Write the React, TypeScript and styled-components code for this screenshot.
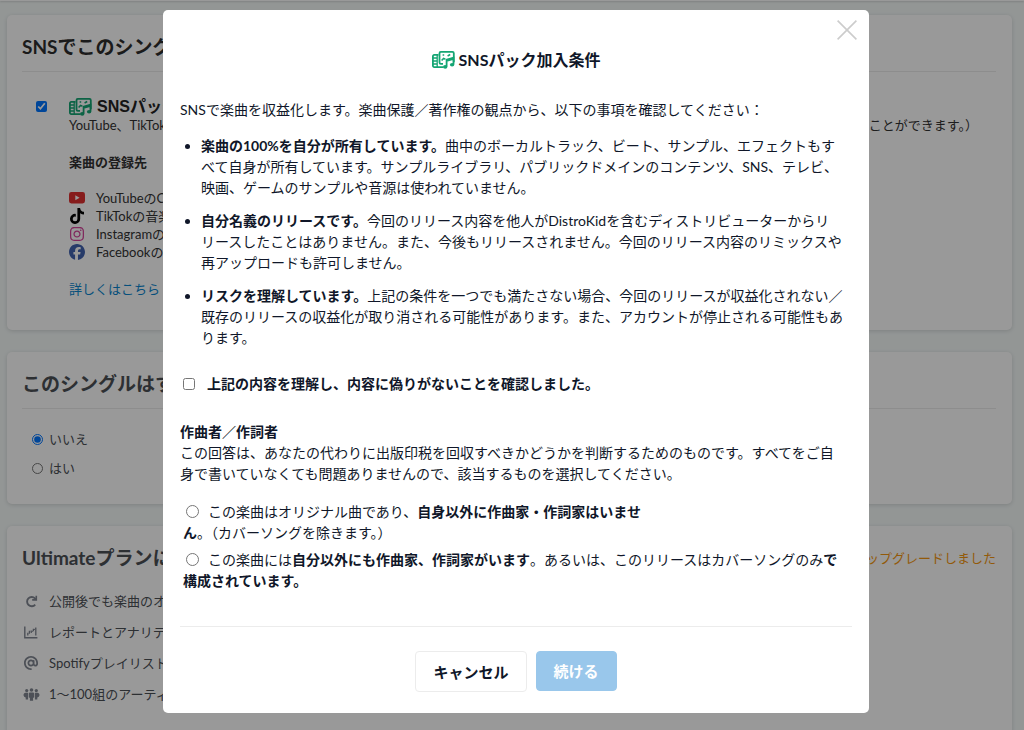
import React from "react";
import styled, { createGlobalStyle } from "styled-components";
import { FaAt, FaFacebook, FaTiktok, FaInstagram } from "react-icons/fa6";

const GlobalStyle = createGlobalStyle`
  *, *::before, *::after { box-sizing: border-box; }
  body {
    margin: 0;
    overflow: hidden;
    background: #f5faf9;
    font-family: Lato, "Noto Sans CJK JP", sans-serif;
    font-size: 13px;
    line-height: 18px;
    color: #333;
  }
  h1, h2, h3, p, ul { margin: 0; padding: 0; }
`;

const Page = styled.div`
  height: 100vh;
  overflow: hidden;
`;

const TopBar = styled.header`
  height: 1px;
  background: #fff;
  box-shadow: 0 1px 2px rgba(0, 0, 0, 0.2);
`;

const Main = styled.main`
  display: flex;
  flex-direction: column;
  gap: 22px;
  padding: 14px 12px 0 7px;
`;

const Card = styled.section<{ $height: number }>`
  min-height: ${(p) => p.$height}px;
  padding: 17px 16px 24px 15px;
  background: #fff;
  border-radius: 5px;
  box-shadow: 0 1px 4px rgba(0, 0, 0, 0.14);
`;

const CardHeading = styled.h2<{ $muted?: boolean; $plain?: boolean }>`
  padding-bottom: ${(p) => (p.$plain ? 0 : 9)}px;
  border-bottom: ${(p) => (p.$plain ? "none" : "1px solid #ebebeb")};
  font-size: 19px;
  line-height: 30px;
  font-weight: 700;
  color: ${(p) => (p.$muted ? "#4c5056" : "#2e2e2e")};
  white-space: nowrap;
`;

const PackRow = styled.div`
  display: flex;
  gap: 22px;
  padding: 26px 18px 0 14px;
`;

const PackCheck = styled.input`
  flex: none;
  width: 11px;
  height: 11px;
  margin: 3px 0;
`;

const PackBody = styled.div`
  flex: 1;
`;

const PackTitle = styled.label`
  display: flex;
  align-items: center;
  gap: 5px;
  font: 700 16px/18px "Liberation Sans", "Noto Sans CJK JP", sans-serif;
  color: #222;
`;

const Spread = styled.div`
  display: flex;
  justify-content: space-between;
  white-space: nowrap;
`;

const SubHeading = styled.h3`
  margin: 19px 0 18px;
  font-size: 13px;
  line-height: 18px;
`;

const Services = styled.ul`
  list-style: none;
`;

const Service = styled.li`
  display: flex;
  align-items: center;
  gap: 11px;
  line-height: 18px;
`;

const ServiceIcon = styled.span<{ $color: string }>`
  display: flex;
  width: 16px;
  color: ${(p) => p.$color};
`;

const MoreLink = styled.a`
  display: inline-block;
  margin-top: 19px;
  color: #0b86cf;
  text-decoration: none;
`;

const Choices = styled.div`
  display: flex;
  flex-direction: column;
  gap: 11px;
  padding: 21px 10px 0;
`;

const Choice = styled.label`
  display: flex;
  align-items: center;
  gap: 6px;
  color: #4c5056;

  input {
    width: 11px;
    height: 11px;
    margin: 0;
  }
`;

const UpgradeNote = styled.a`
  color: #f5970f;
  text-decoration: none;
`;

const CardTop = styled.div`
  display: flex;
  justify-content: space-between;
  align-items: center;
`;

const Features = styled.ul`
  display: flex;
  flex-direction: column;
  gap: 13px;
  padding-top: 19px;
  list-style: none;
  color: #4c5056;
`;

const Feature = styled.li`
  display: flex;
  align-items: center;
  gap: 9px;
`;

const FeatureIcon = styled.span`
  display: flex;
  justify-content: center;
  width: 18px;
  color: #808691;
`;

const Overlay = styled.div`
  position: fixed;
  inset: 0;
  display: flex;
  justify-content: center;
  align-items: flex-start;
  padding: 10px 0 10px 8px;
  overflow: auto;
  background: rgba(0, 0, 0, 0.4);
`;

const Dialog = styled.div`
  position: relative;
  width: 706px;
  max-width: 100%;
  padding: 39px 17px 21px;
  background: #fff;
  border-radius: 5px;
  font-size: 14px;
  line-height: 21px;
  color: #101729;
`;

const CloseButton = styled.button`
  position: absolute;
  top: 10px;
  right: 12px;
  display: flex;
  padding: 0;
  border: 0;
  background: none;
  color: #ccc;
`;

const DialogTitle = styled.h1`
  display: flex;
  justify-content: center;
  align-items: center;
  gap: 4px;
  margin-bottom: 28px;
  font-size: 16px;
  line-height: 22px;
  font-weight: 700;
`;

const Terms = styled.ul`
  display: flex;
  flex-direction: column;
  gap: 12px;
  margin: 15px 0 25px;
  padding: 0 6px 0 21px;
`;

const Confirm = styled.label`
  display: flex;
  align-items: center;
  gap: 12px;
  padding-left: 3px;
  margin-bottom: 27px;
  font-weight: 700;

  input {
    width: 12px;
    height: 12px;
    margin: 0;
  }
`;

const WriterHeading = styled.h2`
  font-size: 14px;
  line-height: 21px;
`;

const WriterText = styled.p`
  padding-right: 6px;
`;

const WriterOptions = styled.div`
  display: flex;
  flex-direction: column;
  gap: 6px;
  margin: 17px 0 35px;
  padding: 0 6px 0 3px;
`;

const WriterOption = styled.label<{ $maxWidth?: number }>`
  display: block;
  max-width: ${(p) => (p.$maxWidth ? `${p.$maxWidth}px` : "none")};

  input {
    width: 13px;
    height: 13px;
    margin: 0 9px 0 3px;
    vertical-align: -1px;
  }
`;

const Actions = styled.div`
  display: flex;
  justify-content: center;
  gap: 9px;
  padding: 24px 0 0;
  border-top: 1px solid #ececec;
`;

const Button = styled.button<{ $primary?: boolean }>`
  height: ${(p) => (p.$primary ? 40 : 41)}px;
  padding: 0 17px;
  border: 1px solid ${(p) => (p.$primary ? "#99c7eb" : "#ececec")};
  border-radius: 4px;
  background: ${(p) => (p.$primary ? "#99c7eb" : "#fff")};
  font: 700 15px/22px Lato, "Noto Sans CJK JP", sans-serif;
  color: ${(p) => (p.$primary ? "#fff" : "#101729")};
`;

const PackIcon = () => (
  <svg width="23" height="18" viewBox="0 0 23 18" fill="none" stroke="#14a573" aria-hidden="true">
    <path d="M6.500 3.900H2.200A1.300 1.300 0 0 0 .9 5.200v9.600a1.300 1.300 0 0 0 1.300 1.300H11.500" strokeWidth="1.8" />
    <path d="M5.200 4v12" strokeWidth="1.300" />
    <path d="M1 7h4M1 10h4M1 13h4" strokeWidth="1.500" />
    <path d="M11 12.800H8.800a1.300 1.300 0 0 1-1.300-1.300V2.200A1.300 1.300 0 0 1 8.800.9h11.700a1.300 1.300 0 0 1 1.300 1.300v9" strokeWidth="1.8" />
    <path d="M14.600 15.800V8.600l6.900-1.900v6.900M14.600 9.900l6.900-1.900" strokeWidth="1.800" />
    <ellipse cx="13.200" cy="15.900" rx="2.200" ry="1.800" fill="#14a573" stroke="none" />
    <ellipse cx="20.100" cy="13.800" rx="2.200" ry="1.700" fill="#14a573" stroke="none" />
    <path d="M9.600 9.600l2-2.200 1.800.8M10.600 3.900h1.600M15.600 5l2.600-1.500" strokeWidth="1.500" />
  </svg>
);

const YouTubeIcon = () => (
  <svg width="16" height="12" viewBox="0 0 16 12" aria-hidden="true">
    <rect width="16" height="11.4" rx="2.4" fill="#e02f2f" />
    <path d="M6.3 3.2v5l4.3-2.5z" fill="#fff" />
  </svg>
);

const RedoIcon = () => (
  <svg width="13" height="13" viewBox="0 0 13 13" fill="none" stroke="currentColor" strokeWidth="1.9" aria-hidden="true">
    <path d="M10.2 9.6A4.6 4.6 0 1 1 10 3.4l1.2 1.2" />
    <path d="M11.3.8v4.1H7.2" strokeWidth="1.6" />
  </svg>
);

const ChartIcon = () => (
  <svg width="14" height="13" viewBox="0 0 14 13" fill="none" stroke="currentColor" strokeWidth="1.4" aria-hidden="true">
    <path d="M.8.6v11.2h12.6" />
    <path d="M3.800 9.400V6.800M5.400 7.800V4.800M7.200 6.800V4.400M9.400 5.200V2.800M11.800 1.600v7.800" strokeWidth="1.300" />
    <path d="M7 6.600l4.600-4.200" strokeWidth="1" />
  </svg>
);

const PeopleIcon = () => (
  <svg width="17" height="13" viewBox="0 0 16 13" fill="currentColor" aria-hidden="true">
    <circle cx="3.2" cy="2.6" r="1.6" />
    <circle cx="8" cy="2" r="1.8" />
    <circle cx="12.8" cy="2.6" r="1.6" />
    <path d="M2 4.8h2.6v6.6H2.2V9.6A3 3 0 0 1 0 7.200C0 5.800.8 4.800 2 4.800z" />
    <path d="M14 4.800h-2.600v6.600h2.400V9.600A3 3 0 0 0 16 7.200c0-1.400-.8-2.400-2-2.400z" />
    <path d="M6.600 4.400h2.800c.8 0 1.300.6 1.300 1.300v3.500L9.600 10v2.800H6.400V10L5.300 9.200V5.700c0-.7.5-1.300 1.300-1.300z" />
  </svg>
);

const CloseIcon = () => (
  <svg width="20" height="20" viewBox="0 0 20 20" stroke="currentColor" strokeWidth="1.6" aria-hidden="true">
    <path d="M.6.6l18.8 18.8M19.400.6L.6 19.400" />
  </svg>
);

const services = [
  { icon: <YouTubeIcon />, color: "#e02f2f", text: "YouTubeのC" },
  { icon: <FaTiktok size={16} />, color: "#000", text: "TikTokの音楽" },
  { icon: <FaInstagram size={16} />, color: "#d6439b", text: "Instagramの" },
  { icon: <FaFacebook size={16} />, color: "#4263b0", text: "Facebookの" },
];

const features = [
  { icon: <RedoIcon />, text: "公開後でも楽曲のオ" },
  { icon: <ChartIcon />, text: "レポートとアナリテ" },
  { icon: <FaAt size={14} />, text: "Spotifyプレイリスト" },
  { icon: <PeopleIcon />, text: "1〜100組のアーティ" },
];

const terms = [
  {
    lead: "楽曲の100%を自分が所有しています。",
    text: "曲中のボーカルトラック、ビート、サンプル、エフェクトもすべて自身が所有しています。サンプルライブラリ、パブリックドメインのコンテンツ、SNS、テレビ、映画、ゲームのサンプルや音源は使われていません。",
  },
  {
    lead: "自分名義のリリースです。",
    text: (
      <>
        今回のリリース内容を他人がDistroKidを含むディストリビューターからリ
        <br />
        リースしたことはありません。また、今後もリリースされません。今回のリリース内容のリミックスや再アップロードも許可しません。
      </>
    ),
  },
  {
    lead: "リスクを理解しています。",
    text: "上記の条件を一つでも満たさない場合、今回のリリースが収益化されない／既存のリリースの収益化が取り消される可能性があります。また、アカウントが停止される可能性もあります。",
  },
];

export default function App() {
  return (
    <>
      <GlobalStyle />
      <Page lang="ja">
        <TopBar />
        <Main>
          <Card $height={315}>
            <CardHeading>SNSでこのシング</CardHeading>
            <PackRow>
              <PackCheck type="checkbox" id="pack" defaultChecked />
              <PackBody>
                <PackTitle htmlFor="pack">
                  <PackIcon />
                  SNSパック
                </PackTitle>
                <Spread>
                  <span>YouTube、TikTok</span>
                  <span>ことができます。）</span>
                </Spread>
                <SubHeading>楽曲の登録先</SubHeading>
                <Services>
                  {services.map((s) => (
                    <Service key={s.text}>
                      <ServiceIcon $color={s.color}>{s.icon}</ServiceIcon>
                      {s.text}
                    </Service>
                  ))}
                </Services>
                <MoreLink href="#more">詳しくはこちら</MoreLink>
              </PackBody>
            </PackRow>
          </Card>

          <Card $height={152}>
            <CardHeading $muted>このシングルはす</CardHeading>
            <Choices>
              <Choice>
                <input type="radio" name="released" defaultChecked />
                いいえ
              </Choice>
              <Choice>
                <input type="radio" name="released" />
                はい
              </Choice>
            </Choices>
          </Card>

          <Card $height={260}>
            <CardTop>
              <CardHeading $muted $plain>
                Ultimateプランに
              </CardHeading>
              <UpgradeNote href="#upgrade">アップグレードしました</UpgradeNote>
            </CardTop>
            <Features>
              {features.map((f) => (
                <Feature key={f.text}>
                  <FeatureIcon>{f.icon}</FeatureIcon>
                  {f.text}
                </Feature>
              ))}
            </Features>
          </Card>
        </Main>
      </Page>

      <Overlay lang="ja">
        <Dialog role="dialog" aria-modal="true" aria-labelledby="dialog-title">
          <CloseButton type="button" aria-label="閉じる">
            <CloseIcon />
          </CloseButton>
          <DialogTitle id="dialog-title">
            <PackIcon />
            SNSパック加入条件
          </DialogTitle>
          <p>SNSで楽曲を収益化します。楽曲保護／著作権の観点から、以下の事項を確認してください：</p>
          <Terms>
            {terms.map((t) => (
              <li key={t.lead}>
                <strong>{t.lead}</strong>
                {t.text}
              </li>
            ))}
          </Terms>
          <Confirm>
            <input type="checkbox" />
            上記の内容を理解し、内容に偽りがないことを確認しました。
          </Confirm>
          <WriterHeading>作曲者／作詞者</WriterHeading>
          <WriterText>
            この回答は、あなたの代わりに出版印税を回収すべきかどうかを判断するためのものです。すべてをご自身で書いていなくても問題ありませんので、該当するものを選択してください。
          </WriterText>
          <WriterOptions>
            <WriterOption $maxWidth={468}>
              <input type="radio" name="writer" />
              この楽曲はオリジナル曲であり、<strong>自身以外に作曲家・作詞家はいません</strong>。（カバーソングを除きます。）
            </WriterOption>
            <WriterOption>
              <input type="radio" name="writer" />
              この楽曲には<strong>自分以外にも作曲家、作詞家がいます</strong>。あるいは、このリリースはカバーソングのみ<strong>で構成されています。</strong>
            </WriterOption>
          </WriterOptions>
          <Actions>
            <Button type="button">キャンセル</Button>
            <Button type="button" $primary>
              続ける
            </Button>
          </Actions>
        </Dialog>
      </Overlay>
    </>
  );
}
